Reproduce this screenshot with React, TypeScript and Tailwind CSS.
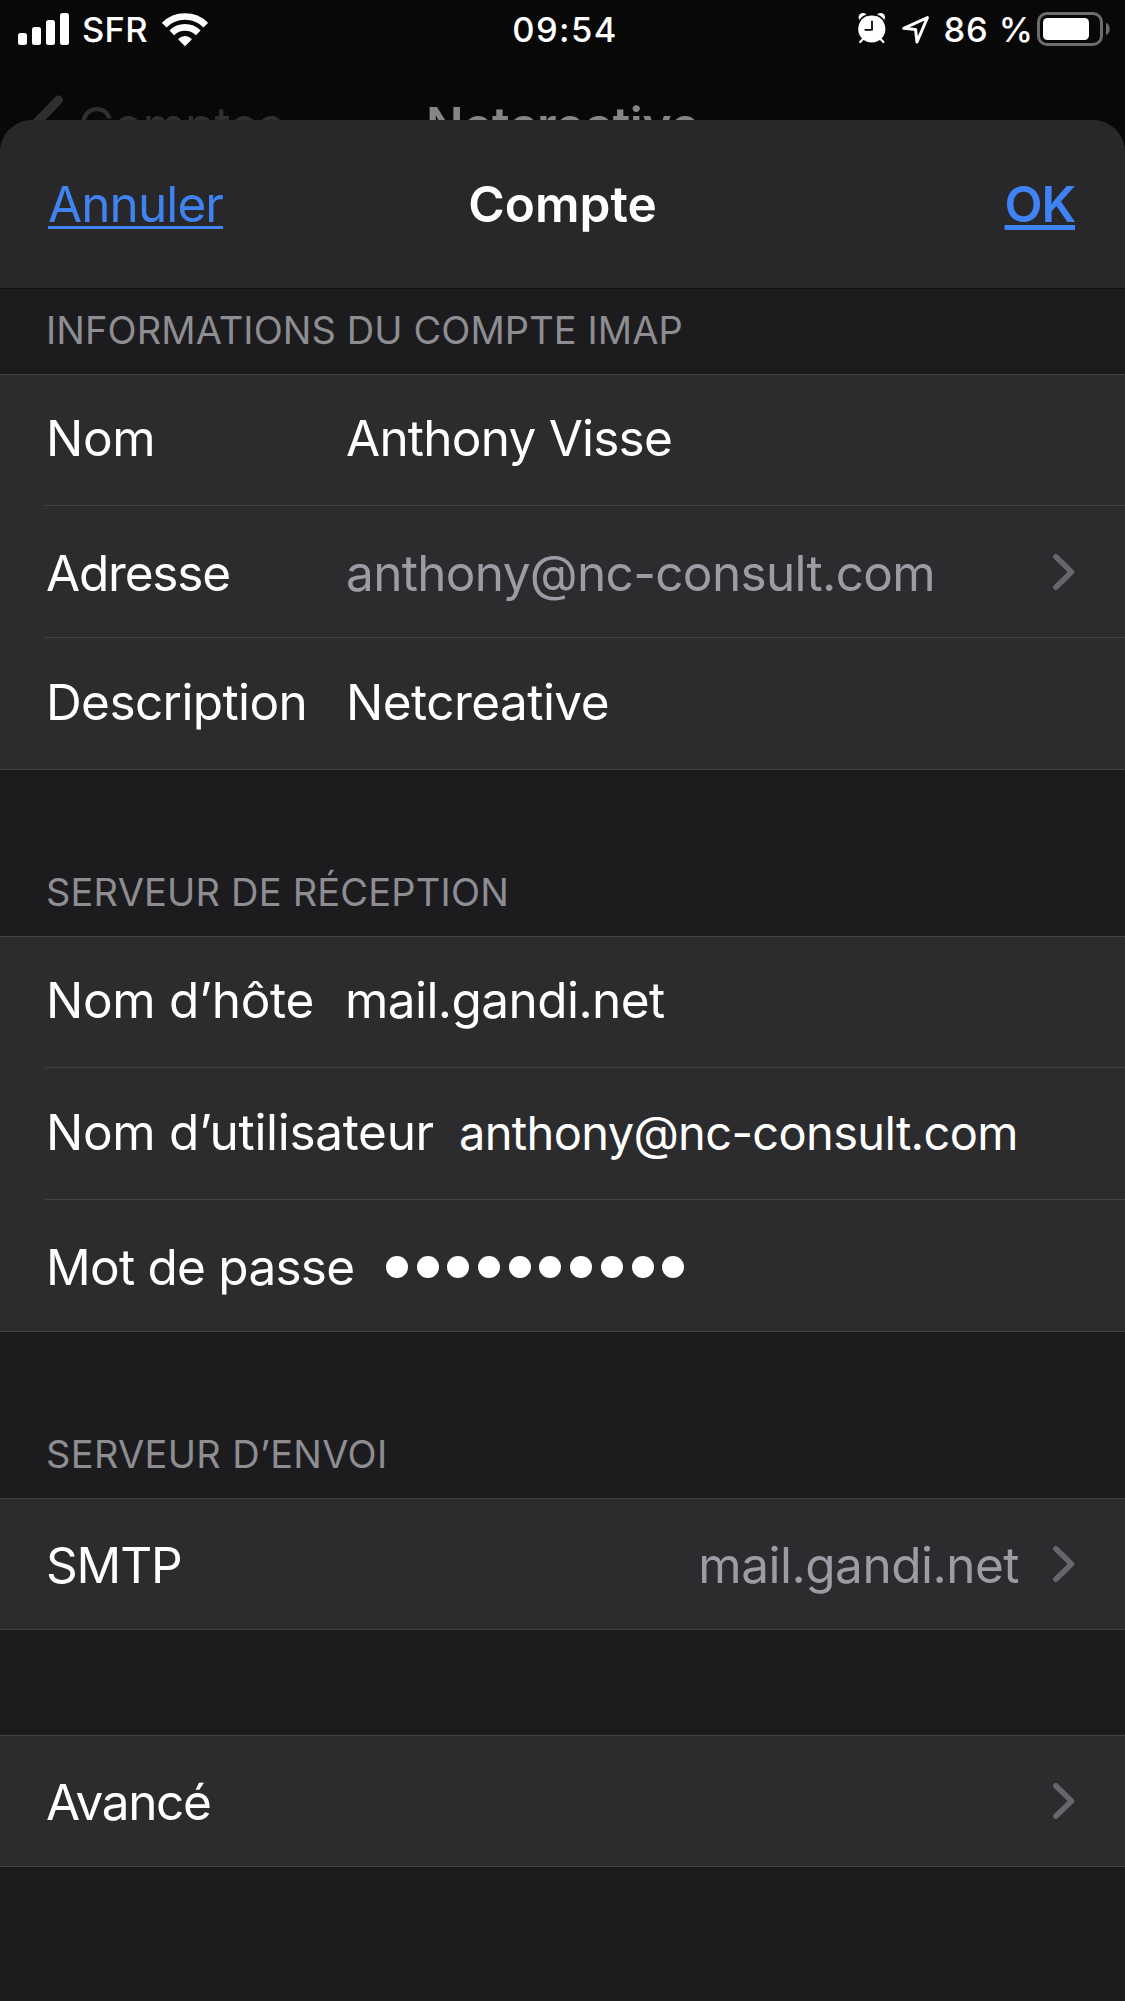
import clsx from "clsx";

// ── Data ─────────────────────────────────────────────────────────────────────

interface RowData {
    label: string;
    labelClass: string;
    value?: string;
    valueClass?: string;
    password?: number;
    chevron?: boolean;
    // optical nudge of the text line inside the cell
    nudge: string;
}

interface Section {
    title?: string;
    titleClass?: string;
    rows: RowData[];
}

const sections: Section[] = [
    {
        title: "Informations du compte IMAP",
        titleClass: "h-[85px] tracking-[0.09px]",
        rows: [
            { label: "Nom", labelClass: "w-[300px] tracking-[-0.3px]", value: "Anthony Visse", valueClass: "text-white tracking-[-0.77px]", nudge: "pb-[2px]" },
            { label: "Adresse", labelClass: "w-[300px] tracking-[-1.2px]", value: "anthony@nc-consult.com", valueClass: "text-[#9d9ca4] tracking-[-0.67px]", chevron: true, nudge: "pt-[5px]" },
            { label: "Description", labelClass: "w-[300px] tracking-[-0.6px]", value: "Netcreative", valueClass: "text-white tracking-[-0.55px]", nudge: "pb-px" },
        ],
    },
    {
        title: "Serveur de réception",
        titleClass: "h-[166px] tracking-[0.2px]",
        rows: [
            { label: "Nom d’hôte", labelClass: "w-[299px] tracking-[-0.3px]", value: "mail.gandi.net", valueClass: "text-white tracking-[-0.57px]", nudge: "pb-[2px]" },
            { label: "Nom d’utilisateur", labelClass: "w-[413px] tracking-[-0.32px]", value: "anthony@nc-consult.com", valueClass: "text-white text-[47px] tracking-[-0.66px]", nudge: "pb-px" },
            { label: "Mot de passe", labelClass: "w-[340px] tracking-[-0.75px]", password: 10, nudge: "pt-[5px]" },
        ],
    },
    {
        title: "Serveur d’envoi",
        titleClass: "h-[166px] tracking-[0.33px]",
        rows: [
            { label: "SMTP", labelClass: "tracking-[-1.14px]", value: "mail.gandi.net", valueClass: "ml-auto mr-[34px] text-[#9d9ca4] tracking-[-0.5px]", chevron: true, nudge: "pt-[4px]" },
        ],
    },
    {
        rows: [{ label: "Avancé", labelClass: "tracking-[-1.34px]", chevron: true, nudge: "pt-[4px]" }],
    },
];

// ── Icons ────────────────────────────────────────────────────────────────────

function SignalIcon() {
    return (
        <svg width="51" height="36" viewBox="0 0 51 36" fill="white">
            <rect x="0" y="22" width="9" height="12" rx="2.5" />
            <rect x="14" y="16" width="9" height="18" rx="2.5" />
            <rect x="28" y="9" width="9" height="25" rx="2.5" />
            <rect x="42" y="2" width="9" height="32" rx="2.5" />
        </svg>
    );
}

function WifiIcon() {
    return (
        <svg width="46" height="36" viewBox="0 0 46 36" fill="none" stroke="white">
            <path d="M2.2 14.1 A29.5 29.5 0 0 1 43.8 14.1" strokeWidth="6.6" />
            <path d="M9.8 21.8 A18.7 18.7 0 0 1 36.2 21.8" strokeWidth="6.6" />
            <path d="M23 34.2 L17 28.2 A8.6 8.6 0 0 1 29 28.2 Z" fill="white" strokeWidth="1.4" strokeLinejoin="round" />
        </svg>
    );
}

function AlarmIcon() {
    return (
        <svg width="28" height="36" viewBox="0 0 28 36" fill="none">
            <circle cx="5" cy="6.3" r="4.4" fill="white" />
            <circle cx="22.6" cy="6.3" r="4.4" fill="white" />
            <circle cx="13.8" cy="18" r="14.6" stroke="#080808" strokeWidth="1.6" />
            <circle cx="13.8" cy="18" r="13.6" fill="white" />
            <path d="M14 10.5 V18.8 H7.3" stroke="#080808" strokeWidth="1.8" strokeLinecap="round" strokeLinejoin="round" />
            <path d="M5.5 27.5 L2.2 31 M22.1 27.5 L25.4 31" stroke="white" strokeWidth="2.2" strokeLinecap="round" />
        </svg>
    );
}

function LocationIcon() {
    return (
        <svg width="28" height="36" viewBox="0 0 28 36" fill="none">
            <path d="M1.7 17.3 L25.4 6.6 L15 31 L13.6 18.5 Z" stroke="white" strokeWidth="3" strokeLinejoin="round" />
        </svg>
    );
}

function BatteryIcon() {
    return (
        <svg width="73" height="36" viewBox="0 0 73 36" fill="none">
            <rect x="1.5" y="2.5" width="63" height="31" rx="8.5" stroke="#6c6c6c" strokeWidth="3" />
            <rect x="6" y="7" width="46" height="22" rx="4.5" fill="white" />
            <path d="M69 11.8 C74 14 74 22 69 24.2 Z" fill="#6c6c6c" />
        </svg>
    );
}

function ChevronIcon() {
    return (
        <svg width="22" height="36" viewBox="0 0 22 36" fill="none" className="shrink-0">
            <path d="M2.8 2.8 L18.5 18 L2.8 33.2" stroke="#67676b" strokeWidth="5.4" strokeLinecap="round" strokeLinejoin="round" />
        </svg>
    );
}

// ── Parts ────────────────────────────────────────────────────────────────────

function StatusBar() {
    return (
        <div className="grid h-[58px] grid-cols-[1fr_auto_1fr] items-center text-[34.5px] leading-none font-[450] text-white">
            <div className="flex items-center pl-[18px]">
                <SignalIcon />
                <span className="ml-[13px] pt-[2px] tracking-[0.3px]">SFR</span>
                <span className="ml-[14px]"><WifiIcon /></span>
            </div>
            <span className="pt-[2px] pl-[5px] tracking-[1.4px]">09:54</span>
            <div className="flex items-center justify-end pr-[15px]">
                <AlarmIcon />
                <span className="ml-4"><LocationIcon /></span>
                <span className="ml-[13px] pt-[2px] whitespace-nowrap tracking-[0.9px]">86 %</span>
                <span className="ml-[3px]"><BatteryIcon /></span>
            </div>
        </div>
    );
}

// Navigation bar of the screen underneath, cut off by the sheet
function BackdropNav() {
    return (
        <div className="h-[62px] overflow-hidden">
            <div className="grid h-[136px] grid-cols-[1fr_auto_1fr] items-center text-[49.5px] leading-none">
                <div className="flex items-center pl-[26px] text-[#2f2f30]">
                    <svg width="38" height="72" viewBox="0 0 38 72" fill="none">
                        <path d="M32.5 10 L5 38.5 L32.5 67" stroke="currentColor" strokeWidth="9" strokeLinecap="round" />
                    </svg>
                    <span className="ml-[14px] tracking-[-0.73px]">Comptes</span>
                </div>
                <span className="font-semibold tracking-[-0.38px] text-[#868686]">Netcreative</span>
            </div>
        </div>
    );
}

function Row({ row, first, last }: { row: RowData; first: boolean; last: boolean }) {
    return (
        <div className={clsx("flex border-[#434346] pl-[45px]", first ? "h-[131px]" : "h-[132px]", last && "border-b")}>
            <div className={clsx("flex flex-1 items-center border-[#434346] pr-[50px]", !last && "border-b")}>
                <div className={clsx("flex flex-1 items-baseline pl-px whitespace-nowrap", row.nudge)}>
                    <span className={clsx("shrink-0", row.labelClass)}>{row.label}</span>
                    {row.value && <span className={row.valueClass}>{row.value}</span>}
                    {row.password && (
                        <div className="mb-[2px] flex gap-[8.7px] self-center">
                            {Array.from({ length: row.password }, (_, i) => (
                                <span key={i} className="size-[22px] rounded-full bg-white" />
                            ))}
                        </div>
                    )}
                </div>
                {row.chevron && <ChevronIcon />}
            </div>
        </div>
    );
}

// ── App ──────────────────────────────────────────────────────────────────────

export default function App() {
    return (
        <div className="flex h-[2001px] w-[1125px] flex-col overflow-hidden bg-[#080808] font-['Inter',sans-serif]">
            <StatusBar />
            <BackdropNav />

            <div className="flex-1 overflow-hidden rounded-t-[32px] bg-[#1c1c1e] text-[49.5px] leading-none text-white">
                {/* Header */}
                <div className="grid h-[169px] grid-cols-[1fr_auto_1fr] items-center border-b border-[#131314] bg-[#28282a] pt-[2px] pr-[50px] pl-12">
                    <a className="justify-self-start tracking-[-0.9px] text-[#4082f0] underline decoration-[3px] underline-offset-[4px]">
                        Annuler
                    </a>
                    <h1 className="pl-[2px] font-semibold">Compte</h1>
                    <a className="justify-self-end font-semibold tracking-[-1.2px] text-[#3f82f4] underline decoration-[5px] underline-offset-[3px]">
                        OK
                    </a>
                </div>

                {/* Sections */}
                {sections.map((s, i) => (
                    <section key={i}>
                        {s.title ? (
                            <h2 className={clsx("flex items-end pb-[25px] pl-[46px] text-[38px] leading-none text-[#8d8d92] uppercase", s.titleClass)}>
                                {s.title}
                            </h2>
                        ) : (
                            <div className="h-[105px]" />
                        )}
                        <div className="border-t border-[#434346] bg-[#2c2c2e]">
                            {s.rows.map((r, j) => (
                                <Row key={r.label} row={r} first={j === 0} last={j === s.rows.length - 1} />
                            ))}
                        </div>
                    </section>
                ))}
            </div>
        </div>
    );
}
